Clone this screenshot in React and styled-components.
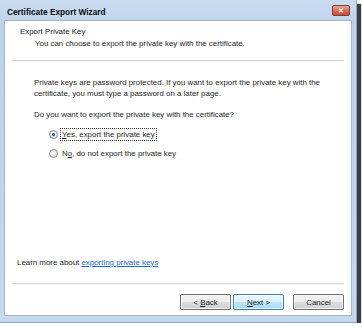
import * as React from 'react';
import styled, { createGlobalStyle } from 'styled-components';

const Global = createGlobalStyle`
  html, body {
    margin: 0;
    padding: 0;
    background: #ffffff;
  }
  body {
    font-family: "Liberation Sans", Arial, sans-serif;
    font-size: 7.9px;
    color: #1e1e1e;
  }
`

const Window = styled.div`
  width: 357px;
  height: 323px;
  box-sizing: border-box;
  display: flex;
  flex-direction: column;
  padding: 0 4px 6px 4px;
  background: linear-gradient(180deg, #c9dcf1 0%, #bdd3eb 8%, #c4d8ee 100%);
  box-shadow: 4px 4px 1px rgba(25, 28, 36, 0.85);
  border: 1px solid #8fa6bf;
  border-top: none;
  border-left: none;
`

const TitleBar = styled.div`
  height: 20px;
  box-sizing: border-box;
  padding: 4px 2px 0 3px;
  display: flex;
  align-items: flex-start;
  justify-content: space-between;
`

const Title = styled.div`
  font-weight: bold;
  font-size: 8.3px;
  line-height: 16px;
  color: #0c0c0c;
`

const CloseButton = styled.div`
  width: 18px;
  height: 11px;
  margin-top: 1px;
  border-radius: 2px;
  border: 1px solid #8d3a2e;
  box-sizing: border-box;
  background: linear-gradient(180deg, #eaa898 0%, #d56f5a 50%, #c44d38 100%);
  display: flex;
  align-items: center;
  justify-content: center;
  color: #f4eeee;
  font-weight: bold;
  font-size: 7px;
  line-height: 1;
`

const Content = styled.div`
  flex: 1;
  background: #ffffff;
  display: flex;
  flex-direction: column;
  border: 1px solid #a3b5c9;
`

const Header = styled.div`
  padding: 5px 0 0 15px;
  line-height: 11px;
`

const Subtitle = styled.div`
  padding-left: 15px;
  margin-top: 1px;
`

const Separator = styled.div`
  height: 1px;
  margin: ${p => p.$top}px 7px 0;
  background: #d6d6d6;
  border-bottom: 1px solid #f4f4f4;
`

const Body = styled.div`
  flex: 1;
  padding: 15px 0 0 29px;
  line-height: 11px;
`

const Paragraph = styled.p`
  margin: 0 0 10px;
`

const Options = styled.div`
  display: flex;
  flex-direction: column;
  gap: 8px;
  padding-left: 15px;
  margin-top: -1px;
`

const Option = styled.label`
  display: flex;
  align-items: center;
  gap: 3px;
`

const Radio = styled.span`
  width: 7px;
  height: 7px;
  border-radius: 50%;
  border: 1px solid #8e8f8f;
  background: radial-gradient(circle at 40% 35%, #ffffff 0%, #d8d8d8 100%);
  display: flex;
  align-items: center;
  justify-content: center;
  &::after {
    content: '';
    width: 3px;
    height: 3px;
    border-radius: 50%;
    background: ${p => (p.$checked ? '#1f4f8f' : 'transparent')};
  }
`

const OptionLabel = styled.span`
  outline: ${p => (p.$focused ? '1px dotted #333' : 'none')};
  padding: 0 1px;
`

const LearnMore = styled.div`
  padding-left: 12px;
  line-height: 11px;
`

const Link = styled.a`
  color: #1c66d1;
  text-decoration: underline;
`

const Footer = styled.div`
  display: flex;
  justify-content: flex-end;
  gap: 2px;
  padding: 9px 7px 5px 0;
`

const Button = styled.button`
  width: 51px;
  height: 16px;
  margin-left: ${p => (p.$gap ? 7 : 0)}px;
  box-sizing: border-box;
  border-radius: 2px;
  border: 1px solid ${p => (p.$default ? '#3c7fb1' : '#707070')};
  background: ${p => (p.$default
    ? 'linear-gradient(180deg, #eaf6fd 0%, #d9f0fc 50%, #bee6fd 51%, #a7d9f5 100%)'
    : 'linear-gradient(180deg, #f2f2f2 0%, #ebebeb 50%, #dddddd 51%, #cfcfcf 100%)')};
  box-shadow: inset 0 0 0 1px rgba(255, 255, 255, 0.7);
  font-family: "Liberation Sans", Arial, sans-serif;
  font-size: 7.9px;
  color: #1e1e1e;
  padding: 0;
`

const U = styled.span`
  text-decoration: underline;
`

export default function App() {
  return (
    <>
      <Global />
      <Window>
        <TitleBar>
          <Title>Certificate Export Wizard</Title>
          <CloseButton>✕</CloseButton>
        </TitleBar>
        <Content>
          <Header>
            <div>Export Private Key</div>
            <Subtitle>You can choose to export the private key with the certificate.</Subtitle>
          </Header>
          <Separator $top={11} />
          <Body>
            <Paragraph>
              Private keys are password protected. If you want to export the private key with the
              <br />
              certificate, you must type a password on a later page.
            </Paragraph>
            <Paragraph>Do you want to export the private key with the certificate?</Paragraph>
            <Options>
              <Option>
                <Radio $checked />
                <OptionLabel $focused><U>Y</U>es, export the private key</OptionLabel>
              </Option>
              <Option>
                <Radio />
                <OptionLabel>N<U>o</U>, do not export the private key</OptionLabel>
              </Option>
            </Options>
          </Body>
          <LearnMore>
            Learn more about <Link>exporting private keys</Link>
          </LearnMore>
          <Separator $top={15} />
          <Footer>
            <Button>&lt; <U>B</U>ack</Button>
            <Button $default><U>N</U>ext &gt;</Button>
            <Button $gap>Cancel</Button>
          </Footer>
        </Content>
      </Window>
    </>
  );
}
